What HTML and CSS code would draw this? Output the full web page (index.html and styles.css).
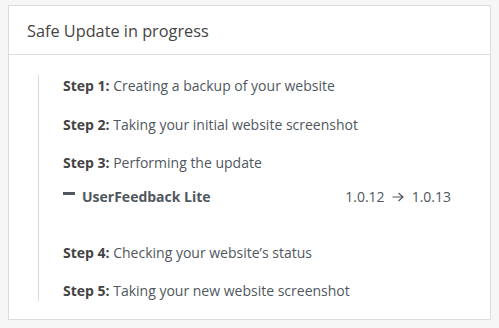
FILE: index.html
```html
<!DOCTYPE html>
<html lang="en">
<head>
    <meta charset="UTF-8">
    <meta name="viewport" content="width=device-width, initial-scale=1.0">
    <title>Safe Update</title>
    <link rel="stylesheet" href="styles.css">
</head>
<body>
    <div class="card">
        <div class="card-header">Safe Update in progress</div>
        <div class="card-body">
            <div class="steps">
                <div class="step"><b>Step 1:</b> Creating a backup of your website</div>
                <div class="step"><b>Step 2:</b> Taking your initial website screenshot</div>
                <div class="step"><b>Step 3:</b> Performing the update</div>
                <div class="plugin">
                    <span class="dash"></span>
                    <span class="plugin-name">UserFeedback Lite</span>
                    <span class="version">1.0.12
                        <svg class="arrow" width="12" height="10" viewBox="0 0 12 10"><path d="M0.5 5h10.5M6.5 1l4.5 4-4.5 4" fill="none" stroke="#50575e" stroke-width="1.2"/></svg>
                        1.0.13</span>
                </div>
                <div class="step"><b>Step 4:</b> Checking your website&rsquo;s status</div>
                <div class="step last"><b>Step 5:</b> Taking your new website screenshot</div>
            </div>
        </div>
    </div>
</body>
</html>
```

FILE: styles.css
```css
body {
    margin: 0;
    padding: 5px 8px 0 8px;
    background-color: #f6f6f6;
    font-family: "Open Sans", "Liberation Sans", sans-serif;
    color: #50575e;
}
.card {
    width: 483px;
    height: 315px;
    box-sizing: border-box;
    background-color: #fff;
    border: 1px solid #dcdcde;
}
.card-header {
    height: 49px;
    box-sizing: border-box;
    padding: 0 18px;
    border-bottom: 1px solid #dcdcde;
    font-size: 16.3px;
    line-height: 50px;
    color: #444;
}
.card-body {
    padding: 20px 39px 0 29px;
}
.steps {
    border-left: 1px solid #dcdcde;
    padding-left: 24px;
}
.step {
    font-size: 14px;
    line-height: 21px;
    margin-bottom: 17.5px;
}
.step b {
    font-weight: 700;
    color: #444;
}
.step.last {
    margin-bottom: -12px;
}
.plugin {
    display: flex;
    align-items: center;
    height: 20px;
    margin-top: -4px;
    margin-bottom: 35px;
    font-size: 14px;
}
.dash {
    width: 12px;
    height: 3px;
    background-color: #50575e;
    margin: 0 7px 6px 0;
}
.plugin-name {
    font-weight: 700;
    color: #50575e;
}
.version {
    margin-left: auto;
    display: flex;
    align-items: center;
    gap: 7.5px;
}
```
